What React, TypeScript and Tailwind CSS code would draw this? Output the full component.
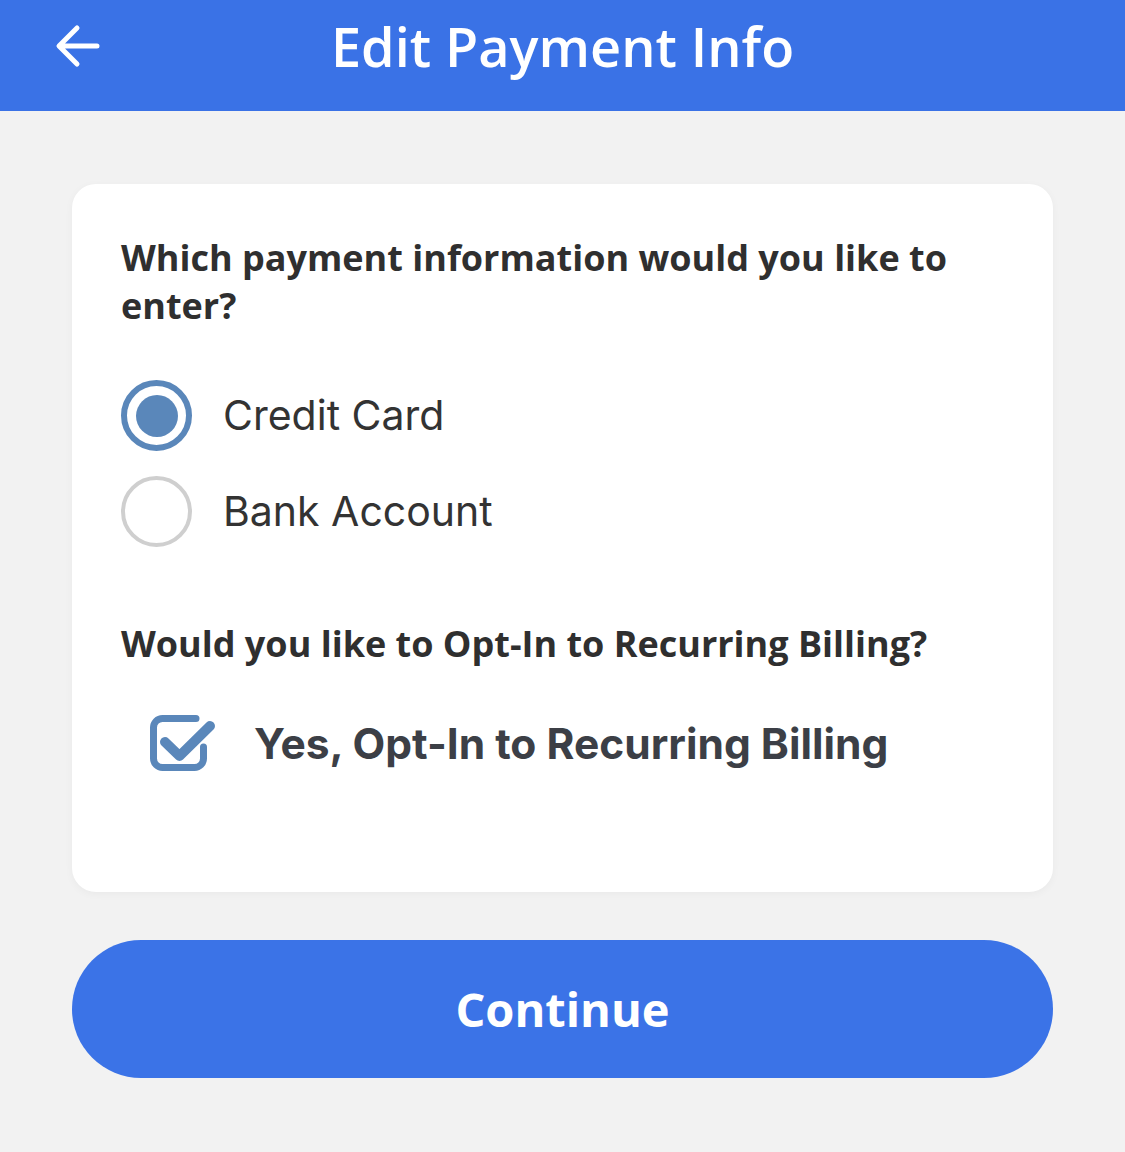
import { useState } from 'react';

type Method = 'card' | 'bank';

function Radio({ checked }: { checked: boolean }) {
  return checked ? (
    <span className="flex h-[71px] w-[71px] shrink-0 items-center justify-center rounded-full border-[6px] border-[#5a87ba]">
      <span className="h-[42px] w-[42px] rounded-full bg-[#5a87ba]" />
    </span>
  ) : (
    <span className="h-[71px] w-[71px] shrink-0 rounded-full border-[4px] border-[#cfcfcf]" />
  );
}

function CheckSquare() {
  return (
    <svg width="68" height="58" viewBox="0 0 68 58" fill="none" className="shrink-0">
      <path
        d="M53.5 32 V43.5 a9 9 0 0 1 -9 9 H12.5 a9 9 0 0 1 -9 -9 V12.5 a9 9 0 0 1 9 -9 H46"
        stroke="#5a87ba"
        strokeWidth="7"
        strokeLinecap="round"
      />
      <path
        d="M15 27 L29.5 41 L60 11"
        stroke="#5a87ba"
        strokeWidth="10"
        strokeLinecap="round"
        strokeLinejoin="round"
      />
    </svg>
  );
}

export default function App() {
  const [method, setMethod] = useState<Method>('card');
  const [optIn, setOptIn] = useState(true);

  return (
    <div className="min-h-[1152px] bg-[#f2f2f2] font-['Open_Sans',sans-serif]">
      {/* Header */}
      <header className="grid h-[111px] grid-cols-[1fr_auto_1fr] items-center bg-[#3a72e6] pb-[20px] text-white">
        <button className="ml-[55px] flex h-[48px] w-[48px] items-center">
          <svg width="46" height="46" viewBox="0 0 46 46" fill="none">
            <path
              d="M42 23 H5 M22 5 L4 23 L22 41"
              stroke="white"
              strokeWidth="5"
              strokeLinecap="round"
              strokeLinejoin="round"
            />
          </svg>
        </button>
        <h1 className="text-[54px] font-semibold leading-none">Edit Payment Info</h1>
        <div />
      </header>

      <main className="px-[72px] pt-[73px]">
        {/* Card */}
        <div className="rounded-[24px] bg-white pb-[116px] pl-[49px] pr-[40px] pt-[50px] shadow-[0_2px_8px_rgba(0,0,0,0.04)]">
          <p className="text-[36px] font-bold leading-[48px] text-[#2f2f2f]">
            Which payment information would you like to enter?
          </p>

          <div className="mt-[50px] flex flex-col gap-[25px]">
            {([
              ['card', 'Credit Card'],
              ['bank', 'Bank Account'],
            ] as [Method, string][]).map(([value, label]) => (
              <button
                key={value}
                onClick={() => setMethod(value)}
                className="flex items-center gap-[31px] text-left"
              >
                <Radio checked={method === value} />
                <span className="font-['Inter',sans-serif] text-[41px] text-[#333333]">{label}</span>
              </button>
            ))}
          </div>

          <p className="mt-[73px] text-[36px] font-bold leading-[48px] text-[#2f2f2f]">
            Would you like to Opt-In to Recurring Billing?
          </p>

          <button
            onClick={() => setOptIn(!optIn)}
            className="mt-[44px] flex items-center gap-[36px] pl-[29px] text-left"
          >
            {optIn ? <CheckSquare /> : <span className="h-[58px] w-[68px]" />}
            <span className="font-['Inter',sans-serif] text-[42.5px] font-bold text-[#3c3f46]">
              Yes, Opt-In to Recurring Billing
            </span>
          </button>
        </div>

        <button className="mt-[48px] flex h-[138px] w-full items-center justify-center rounded-full bg-[#3b73e7] text-[47px] font-bold text-white">
          Continue
        </button>
      </main>
    </div>
  );
}
